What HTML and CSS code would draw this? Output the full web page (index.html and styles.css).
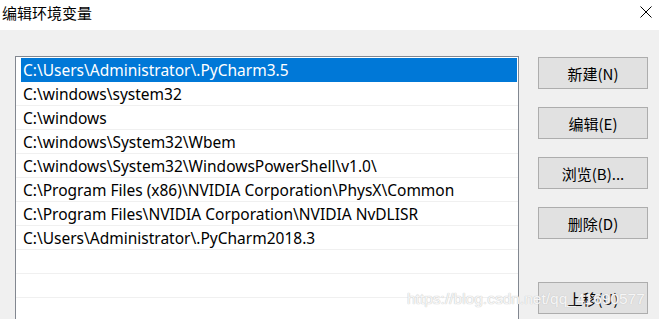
FILE: index.html
```html
<!DOCTYPE html>
<html lang="zh-CN">
<head>
    <meta charset="UTF-8">
    <title>编辑环境变量</title>
    <link rel="stylesheet" href="styles.css">
</head>
<body>
    <div class="window">
        <!-- Title bar -->
        <div class="titlebar">
            <span class="title">编辑环境变量</span>
            <svg class="close" viewBox="0 0 12 12" width="12" height="12">
                <path d="M0.5 0.5 L11.5 11.5 M11.5 0.5 L0.5 11.5" stroke="#000" stroke-width="1" fill="none"/>
            </svg>
        </div>

        <div class="content">
            <!-- Path list -->
            <ul class="path-list">
                <li class="row selected">C:\Users\Administrator\.PyCharm3.5</li>
                <li class="row">C:\windows\system32</li>
                <li class="row">C:\windows</li>
                <li class="row">C:\windows\System32\Wbem</li>
                <li class="row">C:\windows\System32\WindowsPowerShell\v1.0\</li>
                <li class="row">C:\Program Files (x86)\NVIDIA Corporation\PhysX\Common</li>
                <li class="row">C:\Program Files\NVIDIA Corporation\NVIDIA NvDLISR</li>
                <li class="row">C:\Users\Administrator\.PyCharm2018.3</li>
                <li class="row"></li>
                <li class="row"></li>
                <li class="row"></li>
            </ul>

            <!-- Buttons -->
            <div class="buttons">
                <button class="btn">新建(N)</button>
                <button class="btn">编辑(E)</button>
                <button class="btn">浏览(B)...</button>
                <button class="btn">删除(D)</button>
                <button class="btn btn-move">上移(U)</button>
            </div>
        </div>

        <div class="watermark">https://blog.csdn.net/qq_41690577</div>
    </div>
</body>
</html>
```

FILE: styles.css
```css
body {
    margin: 0;
    font-family: "Noto Sans", "Noto Sans CJK SC", sans-serif;
    background-color: #f0f0f0;
}
.window {
    width: 659px;
    height: 319px;
    position: relative;
    overflow: hidden;
    background-color: #f0f0f0;
}
.titlebar {
    height: 30px;
    background-color: #fff;
    display: flex;
    align-items: flex-start;
    justify-content: space-between;
}
.title {
    font-family: "Noto Sans CJK SC", sans-serif;
    font-size: 15px;
    line-height: 26px;
    padding-left: 2px;
    color: #000;
}
.close {
    margin: 6px 7px 0 0;
}
.content {
    display: flex;
    align-items: flex-start;
    padding: 26px 0 0 15px;
    gap: 19px;
}
.path-list {
    list-style: none;
    margin: 0;
    padding: 1px 0 0 0;
    width: 502px;
    height: 280px;
    border: 1px solid #828790;
    background-color: #fff;
}
.row {
    height: 23px;
    line-height: 24px;
    padding-left: 7px;
    font-size: 15.5px;
    color: #000;
    white-space: nowrap;
    border-bottom: 1px solid #f0f0f0;
}
.row.selected {
    background-color: #0078d7;
    color: #fff;
    margin: 0 1px 0 5px;
    padding-left: 2px;
    border-bottom-color: #0078d7;
}
.buttons {
    display: flex;
    flex-direction: column;
    gap: 18px;
    padding-top: 1px;
}
.btn {
    width: 110px;
    height: 32px;
    background-color: #e1e1e1;
    border: 1px solid #adadad;
    font-family: "Noto Sans CJK SC", sans-serif;
    font-size: 15px;
    color: #000;
    padding: 0;
}
.btn-move {
    margin-top: 25px;
}
.watermark {
    position: absolute;
    left: 407px;
    top: 290px;
    font-family: "Liberation Sans", Arial, sans-serif;
    font-size: 15.5px;
    color: rgba(255, 255, 255, 0.85);
    text-shadow: 0 0 1px #c8c8c8, 0 0 1px #c8c8c8;
    white-space: nowrap;
}
```
